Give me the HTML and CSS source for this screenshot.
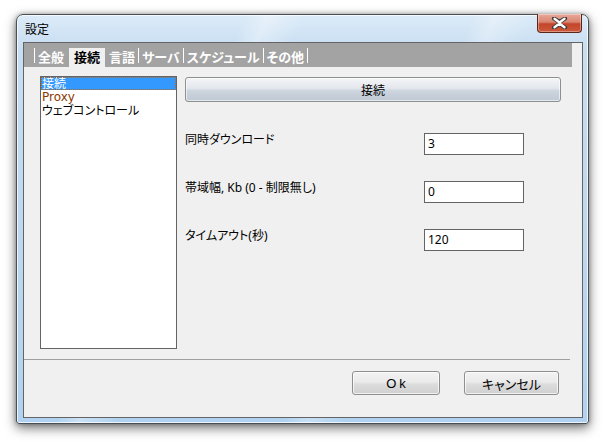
FILE: index.html
```html
<!DOCTYPE html>
<html lang="ja">
<head>
<meta charset="utf-8">
<title>設定</title>
<link rel="stylesheet" href="styles.css">
</head>
<body>
<div class="window">
  <div class="titlebar">
    <span class="title">設定</span>
    <div class="close-btn">
      <svg width="17" height="12" viewBox="0 0 17 12">
        <path d="M3 1.5 L8.5 5 L14 1.5 M3 10.5 L8.5 7 L14 10.5" fill="none" stroke="#3a3a3a" stroke-width="4.2" stroke-linecap="round"/>
        <path d="M3.5 1.8 L8.5 5.5 L13.5 1.8 M3.5 10.2 L8.5 6.5 L13.5 10.2" fill="none" stroke="#ffffff" stroke-width="2.4" stroke-linecap="round"/>
      </svg>
    </div>
  </div>
  <div class="client">
    <div class="tabbar">
      <span class="sep"></span><span class="tab">全般</span>
      <span class="tab active">接続</span>
      <span class="tab">言語</span><span class="sep"></span>
      <span class="tab">サーバ</span><span class="sep"></span>
      <span class="tab">スケジュール</span><span class="sep"></span>
      <span class="tab">その他</span><span class="sep"></span>
    </div>
    <div class="main">
      <div class="listbox">
        <div class="item selected">接続</div>
        <div class="item proxy">Proxy</div>
        <div class="item">ウェブコントロール</div>
      </div>
      <div class="panel">
        <div class="header-btn">接続</div>
        <div class="row first">
          <span class="label">同時ダウンロード</span>
          <span class="input">3</span>
        </div>
        <div class="row">
          <span class="label">帯域幅, Kb (0 - 制限無し)</span>
          <span class="input">0</span>
        </div>
        <div class="row">
          <span class="label">タイムアウト(秒)</span>
          <span class="input">120</span>
        </div>
      </div>
    </div>
    <div class="separator"></div>
    <div class="footer">
      <div class="btn ok">Ok</div>
      <div class="btn cancel">キャンセル</div>
    </div>
  </div>
</div>
</body>
</html>
```

FILE: styles.css
```css
html, body {
  margin: 0;
  padding: 0;
  background: #ffffff;
}
body {
  width: 607px;
  height: 442px;
  overflow: hidden;
  font-family: "Noto Sans", "Noto Sans CJK JP", sans-serif;
  font-size: 12px;
  font-feature-settings: "palt";
}
.window {
  position: relative;
  box-sizing: border-box;
  margin: 14px 0 0 16px;
  width: 573px;
  height: 410px;
  border: 1px solid #4a4f55;
  border-radius: 7px 7px 3px 3px;
  background:
    linear-gradient(115deg, rgba(255,255,255,0) 0%, rgba(255,255,255,0) 30%, rgba(255,255,255,0.35) 33%, rgba(255,255,255,0) 38%, rgba(255,255,255,0) 60%, rgba(255,255,255,0.3) 63%, rgba(255,255,255,0) 68%),
    linear-gradient(180deg, #dcebf8 0%, #c8def2 8%, #bcd7ef 60%, #b0d2f0 100%);
  box-shadow: 0 4px 12px rgba(0,0,0,0.55), 0 0 4px rgba(0,0,0,0.3), inset 0 0 0 1px rgba(255,255,255,0.75);
  padding: 0 5px 5px 6px;
}
.titlebar {
  height: 27px;
  display: flex;
  align-items: center;
}
.title {
  margin-left: 2px;
  margin-top: 1px;
  color: #000;
  font-size: 12px;
}
.close-btn {
  position: absolute;
  top: -1px;
  right: 6px;
  width: 45px;
  height: 19px;
  box-sizing: border-box;
  border: 1px solid #5d2418;
  border-top: none;
  border-radius: 0 0 4px 4px;
  background: linear-gradient(180deg, #e9a999 0%, #d88571 45%, #c4452a 55%, #cc5a3c 100%);
  box-shadow: inset 0 0 0 1px rgba(255,255,255,0.35);
  display: flex;
  align-items: center;
  justify-content: center;
}
.client {
  box-sizing: border-box;
  width: 560px;
  height: 376px;
  border: 1px solid #646464;
  background: #f0f0f0;
  display: flex;
  flex-direction: column;
}
.tabbar {
  width: 548px;
  height: 24px;
  background: #a3a3a3;
  display: flex;
  align-items: flex-end;
  padding-left: 10px;
  box-sizing: border-box;
}
.sep {
  width: 1px;
  height: 15px;
  background: #ffffff;
  margin-bottom: 4px;
}
.tab {
  color: #ffffff;
  font-weight: bold;
  font-size: 13px;
  height: 19px;
  line-height: 18px;
  padding: 0 3px 0 3px;
  white-space: nowrap;
}
.tab.active {
  background: #f0f0f0;
  color: #000;
  margin: 0 1px 0 2px;
  padding: 0 5px 0 5px;
}
.main {
  display: flex;
  padding: 9px 0 0 16px;
  gap: 8px;
}
.listbox {
  box-sizing: border-box;
  width: 137px;
  height: 273px;
  border: 1px solid #646464;
  background: #ffffff;
  padding: 0;
}
.item {
  height: 13px;
  line-height: 13px;
  padding-left: 1px;
  font-size: 12px;
  white-space: nowrap;
  color: #000;
}
.item.selected {
  background: #3399ff;
  color: #fff;
  outline: 1px dotted #b06a20;
  outline-offset: -1px;
}
.item.proxy {
  color: #8a3a00;
  font-family: "DejaVu Sans", "Noto Sans", sans-serif;
  font-size: 12px;
  height: 14px;
  line-height: 14px;
}
.panel {
  width: 376px;
  display: flex;
  flex-direction: column;
}
.header-btn {
  box-sizing: border-box;
  margin-top: 1px;
  height: 25px;
  border: 1px solid #8e8f8f;
  border-radius: 3px;
  background: linear-gradient(180deg, #f4f5f7 0%, #e3e7ec 45%, #cdd5de 55%, #bfc9d4 100%);
  box-shadow: inset 0 0 0 1px rgba(255,255,255,0.6);
  display: flex;
  align-items: center;
  justify-content: center;
  font-size: 12px;
  color: #000;
}
.row {
  display: flex;
  align-items: flex-start;
  height: 22px;
  margin-top: 26px;
}
.row.first {
  margin-top: 31px;
}
.label {
  width: 239px;
  margin-top: 0;
  line-height: 14px;
  white-space: nowrap;
  color: #000;
  font-size: 12px;
}
.input {
  box-sizing: border-box;
  width: 100px;
  height: 22px;
  border: 1px solid #646464;
  background: #fff;
  padding: 3px 0 0 3px;
  line-height: 14px;
  font-size: 12px;
  color: #000;
}
.separator {
  margin-top: 10px;
  width: 546px;
  height: 1px;
  background: #a0a0a0;
}
.footer {
  display: flex;
  justify-content: flex-end;
  gap: 24px;
  padding: 11px 23px 0 0;
}
.btn {
  box-sizing: border-box;
  height: 24px;
  border: 1px solid #8e8f8f;
  border-radius: 3px;
  background: linear-gradient(180deg, #f2f2f2 0%, #ebebeb 45%, #dddddd 55%, #cfcfcf 100%);
  box-shadow: inset 0 0 0 1px rgba(255,255,255,0.7);
  display: flex;
  align-items: center;
  justify-content: center;
  font-size: 13px;
  color: #000;
}
.btn.ok {
  width: 88px;
  letter-spacing: 3px;
  padding-left: 3px;
  font-family: "Liberation Sans", sans-serif;
}
.btn.cancel {
  width: 95px;
}
```
